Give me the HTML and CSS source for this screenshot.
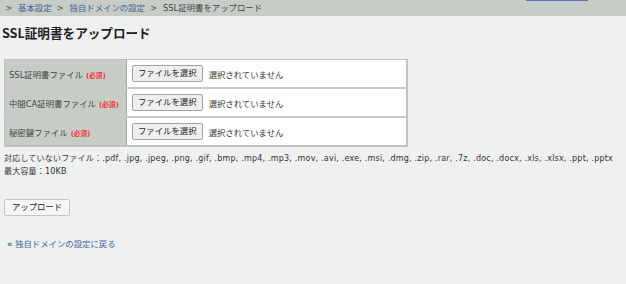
FILE: index.html
```html
<!DOCTYPE html>
<html lang="ja">
<head>
<meta charset="utf-8">
<link rel="stylesheet" href="styles.css">
</head>
<body>
<div class="topbar">
  <nav class="crumbs">
    <span class="sep">&gt;</span><a href="#">基本設定</a><span class="sep">&gt;</span><a href="#">独自ドメインの設定</a><span class="sep">&gt;</span><span class="cur">SSL証明書をアップロード</span>
  </nav>
  <div class="accent"></div>
</div>
<main class="content">
  <h1 class="title">SSL証明書をアップロード</h1>
  <table class="form">
    <tr>
      <th>SSL証明書ファイル<span class="req">(必須)</span></th>
      <td><span class="filebtn">ファイルを選択</span><span class="none">選択されていません</span></td>
    </tr>
    <tr>
      <th>中間CA証明書ファイル<span class="req">(必須)</span></th>
      <td><span class="filebtn">ファイルを選択</span><span class="none">選択されていません</span></td>
    </tr>
    <tr>
      <th>秘密鍵ファイル<span class="req">(必須)</span></th>
      <td><span class="filebtn">ファイルを選択</span><span class="none">選択されていません</span></td>
    </tr>
  </table>
  <p class="note">対応していないファイル：.pdf, .jpg, .jpeg, .png, .gif, .bmp, .mp4, .mp3, .mov, .avi, .exe, .msi, .dmg, .zip, .rar, .7z, .doc, .docx, .xls, .xlsx, .ppt, .pptx<br>最大容量：10KB</p>
  <div class="actions"><span class="btn">アップロード</span></div>
  <a class="back" href="#"><span class="arrow">«</span> 独自ドメインの設定に戻る</a>
</main>
</body>
</html>
```

FILE: styles.css
```css
html, body {
  margin: 0;
  padding: 0;
  background: #eff1f0;
  font-family: "DejaVu Sans", "Noto Sans CJK JP", sans-serif;
  color: #333;
}
.topbar {
  position: relative;
  height: 16px;
  background: #c8ccc7;
}
.accent {
  position: absolute;
  left: 526px;
  top: 0;
  width: 62px;
  height: 1px;
  background: #5b6fc2;
}
.crumbs {
  display: flex;
  align-items: center;
  padding-left: 5px;
  font-size: 8.4px;
  line-height: 16px;
  color: #444;
  white-space: nowrap;
}
.crumbs a {
  color: #3f6596;
  text-decoration: none;
}
.crumbs .sep {
  margin-right: 6px;
  color: #555;
}
.crumbs .sep ~ .sep { margin-left: 5px; }
.crumbs .cur { color: #444; }
.content {
  padding: 0 4px;
}
.title {
  margin: 8px 0 0 -2px;
  font-family: "Noto Sans CJK JP", sans-serif;
  font-size: 12.6px;
  line-height: 18px;
  font-weight: bold;
  color: #222;
}
.form {
  margin-top: 17px;
  width: 404px;
  border-collapse: collapse;
  border: 1px solid #c2c2c2;
  border-right-width: 2px;
  border-bottom-width: 2px;
  background: #fff;
}
.form th, .form td {
  border: 1px solid #c0c0c0;
  height: 27px;
  padding: 0;
  vertical-align: middle;
}
.form tr + tr th, .form tr + tr td {
  border-top-width: 2px;
  border-top-color: #c8c8c8;
}
.form th {
  width: 122px;
  background: #c8ccc7;
  border-right: 1px solid #a9ada8;
  text-align: left;
  font-weight: normal;
  font-size: 8.4px;
  color: #444;
  padding-left: 4px;
  box-sizing: border-box;
  white-space: nowrap;
}
.req {
  margin-left: 3px;
  color: #e33;
  font-size: 6.8px;
  font-weight: bold;
}
.form td {
  padding-left: 5px;
  font-size: 8.4px;
  color: #333;
  white-space: nowrap;
}
.filebtn {
  display: inline-block;
  box-sizing: border-box;
  height: 17px;
  line-height: 15px;
  padding: 0 5px;
  border: 1px solid #a3a3a3;
  border-radius: 2px;
  background: #efefef;
  color: #222;
  font-size: 8.4px;
  vertical-align: middle;
}
.none {
  margin-left: 6px;
  vertical-align: middle;
}
.note {
  margin: 6px 0 0 0;
  font-size: 8px;
  letter-spacing: 0.2px;
  line-height: 12.5px;
  color: #333;
  white-space: nowrap;
}
.actions {
  margin-top: 17px;
}
.btn {
  display: inline-block;
  box-sizing: border-box;
  height: 17px;
  line-height: 15px;
  padding: 0 7px;
  border: 1px solid #c5c5c5;
  border-radius: 2px;
  background: #f6f6f6;
  color: #222;
  font-size: 8.4px;
}
.back {
  display: inline-block;
  margin: 21px 0 0 3px;
  font-size: 8.4px;
  color: #3f6596;
  text-decoration: none;
}
.back .arrow {
  color: #3c8a4a;
  font-weight: bold;
}
```
